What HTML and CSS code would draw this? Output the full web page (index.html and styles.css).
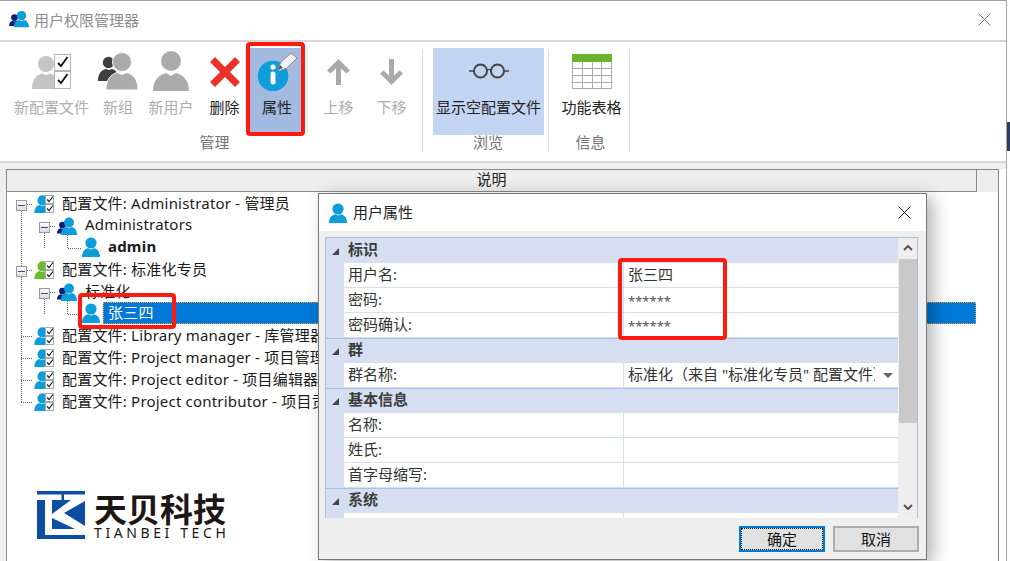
FILE: index.html
```html
<!DOCTYPE html>
<html lang="zh">
<head>
<meta charset="utf-8">
<title>用户权限管理器</title>
<link rel="stylesheet" href="styles.css">
</head>
<body>
<svg class="defs" width="0" height="0" aria-hidden="true">
  <defs>
    <symbol id="user" viewBox="0 0 18 20"><circle cx="9" cy="6" r="5.6"/><path d="M0 20C0 14.500 2.500 12 6 11.200L9 12.600 12 11.200C15.500 12 18 14.500 18 20Z"/></symbol>
    <symbol id="checks" viewBox="0 0 10 18"><rect x=".5" y=".5" width="8" height="8" fill="#fff" stroke="#aaa"/><rect x=".5" y="9.500" width="8" height="8" fill="#fff" stroke="#aaa"/><path d="M2 4.500 4 6.500 8 1.500M2 13.500 4 15.500 8 10.500" fill="none" stroke="#222" stroke-width="1.200"/></symbol>
  </defs>
</svg>
<div class="edge"></div>
<main class="window">
  <header class="titlebar">
    <svg class="title-icon" viewBox="0 0 20 18"><use href="#user" x="0" y="4" width="11" height="12" fill="#0a1f7a"/><use href="#user" x="5" y="0" width="15" height="18" fill="#0d9ddb"/></svg>
    <span class="title-text">用户权限管理器</span>
    <svg class="win-close" viewBox="0 0 13 13"><path d="M.5.5 12.500 12.500M12.500.5.500 12.500" stroke="#777" fill="none"/></svg>
  </header>

  <section class="ribbon">
    <div class="group group-manage">
      <div class="tools">
        <div class="tool off t-profile">
          <svg class="ico" viewBox="0 0 42 38"><circle cx="15" cy="12" r="8" fill="#c4c4c4"/><path d="M1 37C1 28 5 23 11 21.500L15 23 19 21.500C21 22 23 23 24 24.500V37Z" fill="#c4c4c4"/><rect x="23.500" y="2.500" width="16" height="16" fill="#fff" stroke="#b5b5b5"/><rect x="23.500" y="19.500" width="16" height="17" fill="#fff" stroke="#b5b5b5"/><path d="M27 11 30 14 36.500 5M27 28 30 31 36.500 22" fill="none" stroke="#111" stroke-width="1.800"/></svg>
          <span>新配置文件</span>
        </div>
        <div class="tool off t-group">
          <svg class="ico" viewBox="0 0 42 38"><circle cx="11.500" cy="10.500" r="5.700" fill="#3f3f3f"/><path d="M1 29C1 22 4 18 9 17L12 18 15 17C19 18 20 20 20 22L13 29Z" fill="#3f3f3f"/><path d="M9 38C9 28 13 23 20 20.500L25 22.500 30 20.500C37 23 41 28 41 38Z" fill="#ababab" stroke="#fff"/><circle cx="25" cy="10" r="9.500" fill="#ababab" stroke="#fff"/></svg>
          <span>新组</span>
        </div>
        <div class="tool off t-user">
          <svg class="ico" viewBox="0 0 36 40"><circle cx="18" cy="10" r="10" fill="#ababab"/><path d="M0 40C0 29 6 24 13 22L18 25 23 22C30 24 36 29 36 40Z" fill="#ababab"/></svg>
          <span>新用户</span>
        </div>
        <div class="tool t-del">
          <svg class="ico" viewBox="0 0 30 30"><path d="M5 0 15 10 25 0 30 5 20 15 30 25 25 30 15 20 5 30 0 25 10 15 0 5Z" fill="#e8322a"/></svg>
          <span>删除</span>
        </div>
        <div class="tool active t-prop">
          <svg class="ico" viewBox="0 0 42 38"><circle cx="16" cy="23" r="15.300" fill="#0d9ddb"/><circle cx="16" cy="14" r="2.600" fill="#fff"/><rect x="13.500" y="18.500" width="5" height="13" rx="2.500" fill="#fff"/><path d="M21 16 24 9 34 0 40 5 30 15 22 18Z" fill="#f2f2f2" stroke="#8a8a8a"/><path d="M21 17 23 12 26 15Z" fill="#555"/></svg>
          <span>属性</span>
        </div>
        <div class="sep-short"></div>
        <div class="tool off t-up">
          <svg class="ico" viewBox="0 0 23 26"><path d="M11.500 0 23 11.500 19.500 14.500 14 9.500V26H9V9.500L3.500 14.500 0 11.500Z" fill="#aaa"/></svg>
          <span>上移</span>
        </div>
        <div class="tool off t-down">
          <svg class="ico" viewBox="0 0 23 26"><path d="M11.500 26 23 14.500 19.500 11.500 14 16.500V0H9V16.500L3.500 11.500 0 14.500Z" fill="#aaa"/></svg>
          <span>下移</span>
        </div>
      </div>
      <div class="group-label">管理</div>
    </div>
    <div class="group group-browse">
      <div class="tools">
        <div class="tool selected t-glass">
          <svg class="ico" viewBox="0 0 40 16"><circle cx="11.500" cy="8" r="6.500" fill="none" stroke="#444" stroke-width="2"/><circle cx="28.500" cy="8" r="6.500" fill="none" stroke="#444" stroke-width="2"/><path d="M0 8H5M18 7C20 6 20 6 22 7M35 8H40" stroke="#444" stroke-width="1.500" fill="none"/></svg>
          <span>显示空配置文件</span>
        </div>
      </div>
      <div class="group-label">浏览</div>
    </div>
    <div class="group group-info">
      <div class="tools">
        <div class="tool t-table">
          <svg class="ico" viewBox="0 0 40 35"><rect width="40" height="8" fill="#69b32b"/><path d="M.5 8V34.500H39.500V8M10.500 8V34M20.500 8V34M29.500 8V34M0 14.500H40M0 21.500H40M0 28.500H40" fill="none" stroke="#aaa"/></svg>
          <span>功能表格</span>
        </div>
      </div>
      <div class="group-label">信息</div>
    </div>
  </section>

  <section class="content">
    <div class="panel">
      <div class="panel-head">
        <div class="head-cell">说明</div>
        <div class="head-rest"></div>
      </div>
      <div class="tree">
        <svg class="links" width="110" height="230"><path d="M21.500 19V210M27 12.500H33M27 78.500H33M44.500 41V56M50 34.500H56M44.500 107V122M50 100.500H56M67.500 43V56.500H81M67.500 109V122.500H81M21 144.500H33M21 166.500H33M21 188.500H33M21 210.500H33" fill="none" stroke="#666" stroke-dasharray="1 1"/></svg>

        <div class="row lv0"><i class="exp"></i><svg class="ic-profile"><use href="#user" width="17" height="18" fill="#0d9ddb"/><use href="#checks" x="11" width="10" height="18"/></svg><span>配置文件: Administrator - 管理员</span></div>
        <div class="row lv1"><i class="exp"></i><svg class="ic-group"><use href="#user" x="0" y="4" width="11" height="13" fill="#0a1f7a"/><use href="#user" x="4" y="0" width="16" height="18" fill="#0d9ddb"/></svg><span>Administrators</span></div>
        <div class="row lv2"><svg class="ic-user"><use href="#user" width="18" height="20" fill="#0d9ddb"/></svg><b>admin</b></div>
        <div class="row lv0"><i class="exp"></i><svg class="ic-profile"><use href="#user" width="17" height="18" fill="#6bbd2e"/><use href="#checks" x="11" width="10" height="18"/></svg><span>配置文件: 标准化专员</span></div>
        <div class="row lv1"><i class="exp"></i><svg class="ic-group"><use href="#user" x="0" y="4" width="11" height="13" fill="#0a1f7a"/><use href="#user" x="4" y="0" width="16" height="18" fill="#0d9ddb"/></svg><span>标准化</span></div>
        <div class="row lv2 sel"><svg class="ic-user"><use href="#user" width="18" height="20" fill="#0d9ddb"/></svg><span class="sel-text">张三四</span></div>
        <div class="row lv0 leaf"><svg class="ic-profile"><use href="#user" width="17" height="18" fill="#0d9ddb"/><use href="#checks" x="11" width="10" height="18"/></svg><span>配置文件: Library manager - 库管理器</span></div>
        <div class="row lv0 leaf"><svg class="ic-profile"><use href="#user" width="17" height="18" fill="#0d9ddb"/><use href="#checks" x="11" width="10" height="18"/></svg><span>配置文件: Project manager - 项目管理器</span></div>
        <div class="row lv0 leaf"><svg class="ic-profile"><use href="#user" width="17" height="18" fill="#0d9ddb"/><use href="#checks" x="11" width="10" height="18"/></svg><span>配置文件: Project editor - 项目编辑器</span></div>
        <div class="row lv0 leaf"><svg class="ic-profile"><use href="#user" width="17" height="18" fill="#0d9ddb"/><use href="#checks" x="11" width="10" height="18"/></svg><span>配置文件: Project contributor - 项目贡献者</span></div>
      </div>
      <div class="logo">
        <svg class="logo-mark" viewBox="0 0 48 48"><path d="M0 0H48V3.500H0ZM24.500 3.500H27V9H24.500ZM0 9H8V48H0ZM0 44H48V48H0ZM15 9H34L15 23ZM48 10V35L27 22ZM15 27 38 38H15Z" fill="#0b4ea2"/></svg>
        <div class="logo-text">
          <div class="logo-cn">天贝科技</div>
          <div class="logo-en">TIANBEI TECH</div>
        </div>
      </div>
    </div>
  </section>
</main>

<aside class="dialog">
  <header class="dlg-title">
    <svg class="dlg-icon"><use href="#user" width="18" height="20" fill="#0d9ddb"/></svg>
    <span>用户属性</span>
    <svg class="dlg-close" viewBox="0 0 13 13"><path d="M.5.5 12.500 12.500M12.500.5.500 12.500" stroke="#111" fill="none"/></svg>
  </header>
  <div class="dlg-body">
    <div class="grid">
      <div class="grid-main">
        <div class="g-head"><i class="tri"></i><span>标识</span></div>
        <div class="g-row"><div class="k">用户名:</div><div class="v">张三四</div></div>
        <div class="g-row"><div class="k">密码:</div><div class="v pw">******</div></div>
        <div class="g-row"><div class="k">密码确认:</div><div class="v pw">******</div></div>
        <div class="g-head"><i class="tri"></i><span>群</span></div>
        <div class="g-row"><div class="k">群名称:</div><div class="v v-combo"><span>标准化（来自 "标准化专员" 配置文件）</span><i class="drop"></i></div></div>
        <div class="g-head"><i class="tri"></i><span>基本信息</span></div>
        <div class="g-row"><div class="k">名称:</div><div class="v"></div></div>
        <div class="g-row"><div class="k">姓氏:</div><div class="v"></div></div>
        <div class="g-row"><div class="k">首字母缩写:</div><div class="v"></div></div>
        <div class="g-head"><i class="tri"></i><span>系统</span></div>
        <div class="g-row"><div class="k"></div><div class="v"></div></div>
      </div>
      <div class="scroll">
        <svg class="arrow" viewBox="0 0 10 6"><path d="M1 5 5 1 9 5" fill="none" stroke="#555" stroke-width="2"/></svg>
        <div class="thumb"></div>
        <svg class="arrow arrow-end" viewBox="0 0 10 6"><path d="M1 1 5 5 9 1" fill="none" stroke="#555" stroke-width="2"/></svg>
      </div>
    </div>
    <div class="dlg-foot">
      <button class="btn btn-default" type="button"><span>确定</span></button>
      <button class="btn" type="button"><span>取消</span></button>
    </div>
  </div>
</aside>

<div class="mark mark-prop"></div>
<div class="mark mark-user"></div>
<div class="mark mark-values"></div>
</body>
</html>
```

FILE: styles.css
```css
* { box-sizing: border-box; }
html, body { margin: 0; padding: 0; }
body {
  width: 1010px; height: 561px; overflow: hidden; position: relative; background: #fff;
  font-family: "Noto Sans", "Noto Sans CJK SC", sans-serif; font-size: 15px; color: #222;
}
.defs { position: absolute; }
.edge { position: absolute; right: 0; top: 122px; width: 3px; height: 29px; background: #2d3e5e; }
.window {
  width: 1007px; height: 561px; display: flex; flex-direction: column;
  border-top: 1px solid #a0a0a0; border-right: 1px solid #a8a8a8; background: #fff;
}
.titlebar { height: 41px; flex: none; display: flex; align-items: center; padding: 0 15px 3px 9px; border-bottom: 2px solid #d6d6d6; }
.title-icon { width: 20px; height: 18px; margin-right: 5px; }
.title-text { color: #8c8c8c; flex: 1; }
.win-close { width: 13px; height: 13px; }

.ribbon { height: 121px; flex: none; display: flex; padding: 6px 0 0 8px; border-bottom: 2px solid #d6d6d6; }
.group { display: flex; flex-direction: column; align-items: center; height: 104px; position: relative; }
.group::after { content: ""; position: absolute; right: 0; top: 2px; bottom: 0; width: 1px; background: #dadada; }
.group-manage { width: 415px; }
.group-browse { width: 126px; padding-left: 10px; align-items: flex-start; }
.group-info { width: 81px; padding-left: 4px; }
.group-label { color: #737373; line-height: 20px; margin: -3px 0 0 -2px; }
.group-browse .group-label { align-self: center; margin-left: -6px; }
.tools { display: flex; height: 87px; align-self: stretch; }
.tool { display: flex; flex-direction: column; align-items: center; height: 87px; padding-top: 2px; position: relative; white-space: nowrap; }
.tool span { position: absolute; top: 49px; left: 0; right: 0; text-align: center; line-height: 20px; }
.off span { color: #adadad; }
.ico { display: block; flex: none; }
.t-profile { width: 85px; margin-left: 1px; }
.t-profile .ico { width: 42px; height: 38px; margin-top: 2px; }
.t-group { width: 46px; margin-left: 1px; }
.t-group .ico { width: 42px; height: 38px; margin-top: 2px; }
.t-user { width: 58px; margin-left: 1px; }
.t-user .ico { width: 36px; height: 40px; margin-top: 1px; }
.t-del { width: 47px; margin-left: 1px; }
.t-del .ico { width: 30px; height: 30px; margin-top: 7px; }
.active { width: 51px; margin-left: 2px; background: #a3bbe0; }
.active span { left: 3px; }
.t-prop .ico { width: 42px; height: 38px; margin: 3px 0 0 4px; }
.sep-short { width: 1px; height: 87px; background: #e6e6e6; margin: 0 4px 0 6px; }
.t-up, .t-down { width: 53px; }
.t-up .ico, .t-down .ico { width: 23px; height: 26px; margin-top: 9px; }
.selected { width: 111px; background: #c2d5f2; }
.t-glass .ico { width: 40px; height: 16px; margin-top: 13px; }
.t-table { width: 100%; }
.t-table .ico { width: 40px; height: 35px; margin-top: 4px; }

.content { flex: 1; min-height: 0; background: #efefef; padding: 6px 7px 0 6px; }
.panel { height: 100%; border: 1px solid #8a8a8a; border-bottom: 0; background: #fff; position: relative; display: flex; flex-direction: column; box-shadow: 7px 0 0 #fff; }
.panel-head { height: 22px; flex: none; display: flex; background: #eee; }
.head-cell { width: 970px; text-align: center; line-height: 18px; border-right: 1px solid #8a8a8a; border-bottom: 1px solid #8a8a8a; color: #222; }
.head-rest { flex: 1; }
.tree { position: relative; margin-left: -7px; color: #1a1a1a; letter-spacing: .2px; }
.links { position: absolute; left: 0; top: 0; }
.row { height: 22px; display: flex; align-items: center; position: relative; white-space: nowrap; }
.row > span, .row > b { padding-bottom: 2px; }
.lv0 { padding-left: 16px; }
.lv0.leaf { padding-left: 34px; }
.lv1 { padding-left: 39px; }
.lv2 { padding-left: 82px; }
.exp { width: 11px; height: 11px; flex: none; margin: 4px 7px 0 0; border: 1px solid #9a9a9a; background: linear-gradient(#fff, #ddd); position: relative; }
.exp::after { content: ""; position: absolute; left: 1px; right: 1px; top: 4px; height: 1px; background: #2b4c9a; }
.ic-profile, .ic-group { width: 21px; height: 18px; flex: none; margin: 2px 7px 0 0; }
.ic-user { width: 18px; height: 20px; flex: none; margin-right: 8px; }
.row b { font-weight: 700; }
.sel .ic-user { margin-right: 3px; }
.row > .sel-text { width: 873px; height: 22px; line-height: 20px; padding: 0 0 0 5px; background: #0078d7; color: #fff; outline: 1px dotted #e8a040; outline-offset: -1px; }

.logo { display: flex; margin: 79px 0 0 30px; }
.logo-mark { width: 48px; height: 48px; flex: none; margin-right: 9px; }
.logo-cn { font-family: "Noto Sans CJK SC", sans-serif; font-weight: 700; font-size: 33px; line-height: 34px; color: #1e1515; }
.logo-en { font-family: "Noto Sans", sans-serif; font-size: 14px; line-height: 16px; color: #1e1515; letter-spacing: 3.600px; white-space: nowrap; }

.dialog {
  position: absolute; left: 318px; top: 193px; width: 609px; height: 367px;
  border: 1px solid #777; background: #efefef; box-shadow: 6px 4px 16px rgba(0,0,0,.3);
  display: flex; flex-direction: column;
}
.dlg-title { height: 37px; flex: none; background: #fff; display: flex; align-items: center; padding: 0 15px 0 10px; color: #222; }
.dlg-title span { flex: 1; padding-bottom: 3px; }
.dlg-icon { width: 18px; height: 20px; margin-right: 6px; }
.dlg-close { width: 13px; height: 13px; }
.dlg-body { flex: 1; padding: 6px 8px 0 6px; display: flex; flex-direction: column; }
.grid { height: 281px; flex: none; display: flex; border: 1px solid #a9bfe0; border-bottom: 0; background: #eee; overflow: hidden; }
.grid-main { width: 572px; flex: none; overflow: hidden; color: #333; }
.g-head { height: 25px; background: #d5dff1; border-top: 1px solid #a9c0e6; font-weight: 700; display: flex; align-items: center; color: #3c3c3c; }
.g-head span { padding-bottom: 5px; }
.g-head:first-child { border-top-color: #d5dff1; }
.tri { width: 0; height: 0; border-style: solid; border-width: 0 0 7px 7px; border-color: transparent transparent #444 transparent; margin: 0 9px 0 6px; }
.g-row { height: 25px; display: flex; padding-left: 18px; background: #d5dff1; line-height: 23px; }
.k { width: 280px; padding-left: 4px; background: #fff; border-bottom: 1px solid #d5dff1; border-right: 1px solid #d5dff1; }
.v { flex: 1; background: #fff; border-bottom: 1px solid #d5dff1; padding-left: 4px; white-space: nowrap; overflow: hidden; position: relative; }
.pw { font-size: 13px; line-height: 27px; color: #555; }
.v-combo span { display: block; width: 247px; overflow: hidden; }
.drop { position: absolute; right: 5px; top: 10px; width: 0; height: 0; border-style: solid; border-width: 5px 5px 0; border-color: #666 transparent transparent; }
.scroll { flex: 1; display: flex; flex-direction: column; align-items: center; padding-left: 1px; }
.arrow { width: 10px; height: 6px; margin: 7px 0 8px; flex: none; }
.arrow-end { margin: 81px 0 0; }
.thumb { width: 18px; height: 164px; background: #c9c9c9; flex: none; }
.dlg-foot { display: flex; justify-content: flex-end; gap: 8px; margin: 8px -1px 0 0; }
.btn { width: 86px; height: 26px; padding: 0; border: 2px solid #adadad; background: #e1e1e1; font: inherit; color: #111; display: flex; align-items: center; justify-content: center; }
.btn span { padding-bottom: 2px; }
.btn-default { border-color: #0078d7; position: relative; }
.btn-default::after { content: ""; position: absolute; inset: 0; border: 1px dotted #111; }

.mark { position: absolute; border: 4px solid #ff1a10; border-radius: 4px; }
.mark-prop { left: 246px; top: 42px; width: 59px; height: 94px; }
.mark-user { left: 78px; top: 293px; width: 98px; height: 36px; }
.mark-values { left: 618px; top: 258px; width: 109px; height: 82px; }
```
